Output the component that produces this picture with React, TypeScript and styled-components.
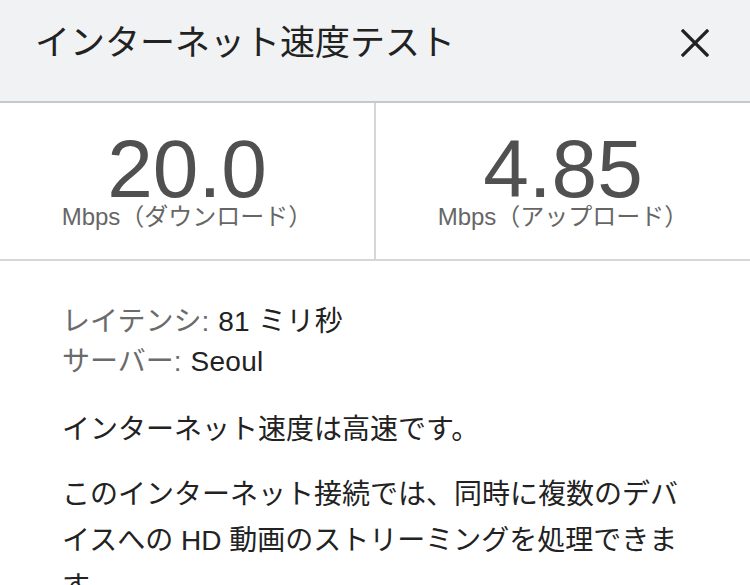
import React from 'react'
import styled, {createGlobalStyle} from 'styled-components'

const GlobalStyle = createGlobalStyle`
  html, body {
    margin: 0;
    padding: 0;
    background: #ffffff;
  }
  body {
    font-family: "Liberation Sans", "Noto Sans CJK JP", sans-serif;
    color: #222222;
  }
  * {
    box-sizing: border-box;
  }
`

const Page = styled.div`
  width: 750px;
  height: 585px;
  overflow: hidden;
  background: #ffffff;
`

const Header = styled.header`
  display: flex;
  align-items: flex-start;
  justify-content: space-between;
  height: 103px;
  padding: 22px 38px 0 35px;
  background: #f1f2f4;
  border-bottom: 2px solid #c7c8ca;
`

const Title = styled.h1`
  margin: 0;
  font-size: 35px;
  font-weight: 400;
  line-height: 42px;
  color: #222222;
`

const CloseButton = styled.button`
  display: flex;
  align-items: center;
  justify-content: center;
  width: 34px;
  height: 42px;
  padding: 0;
  border: none;
  background: none;
  color: #222222;
  cursor: pointer;
`

const Stats = styled.section`
  display: grid;
  grid-template-columns: 376px 1fr;
  height: 158px;
  border-bottom: 2px solid #d6d6d6;
`

const StatCell = styled.div<{divider?: boolean}>`
  display: flex;
  flex-direction: column;
  align-items: center;
  padding-top: 32px;
  border-right: ${p => (p.divider ? '2px solid #d6d6d6' : 'none')};
`

const StatValue = styled.div`
  font-size: 82px;
  line-height: 68px;
  font-weight: 400;
  color: #505050;
`

const StatUnit = styled.div`
  font-size: 24px;
  line-height: 28px;
  color: #666666;
`

const Body = styled.section`
  padding: 41px 62px 0 62px;
`

const InfoList = styled.dl`
  margin: 0;
`

const InfoRow = styled.div`
  display: flex;
  font-size: 28px;
  line-height: 40px;
`

const InfoLabel = styled.dt`
  color: #6b6b6b;
  margin-right: 9px;
`

const InfoValue = styled.dd`
  margin: 0;
  color: #222222;
  letter-spacing: 0.3px;
`

const Text = styled.p<{gap: number}>`
  margin: ${p => p.gap}px 0 0 0;
  font-size: 28px;
  line-height: 46px;
  color: #222222;
`

const CloseIcon = () => (
  <svg width="28" height="28" viewBox="0 0 28 28" fill="none">
    <path
      d="M2 2 L26 26 M26 2 L2 26"
      stroke="currentColor"
      strokeWidth="3.2"
      strokeLinecap="square"
    />
  </svg>
)

const stats = [
  {value: '20.0', unit: 'Mbps（ダウンロード）'},
  {value: '4.85', unit: 'Mbps（アップロード）'},
]

export default function App() {
  return (
    <Page>
      <GlobalStyle />
      <Header>
        <Title>インターネット速度テスト</Title>
        <CloseButton aria-label="閉じる">
          <CloseIcon />
        </CloseButton>
      </Header>
      <Stats>
        {stats.map((s, i) => (
          <StatCell key={s.unit} divider={i === 0}>
            <StatValue>{s.value}</StatValue>
            <StatUnit>{s.unit}</StatUnit>
          </StatCell>
        ))}
      </Stats>
      <Body>
        <InfoList>
          <InfoRow>
            <InfoLabel>レイテンシ:</InfoLabel>
            <InfoValue>81 ミリ秒</InfoValue>
          </InfoRow>
          <InfoRow>
            <InfoLabel>サーバー:</InfoLabel>
            <InfoValue>Seoul</InfoValue>
          </InfoRow>
        </InfoList>
        <Text gap={25}>インターネット速度は高速です。</Text>
        <Text gap={19}>
          このインターネット接続では、同時に複数のデバイスへの HD 動画のストリーミングを処理できます。
        </Text>
      </Body>
    </Page>
  )
}
